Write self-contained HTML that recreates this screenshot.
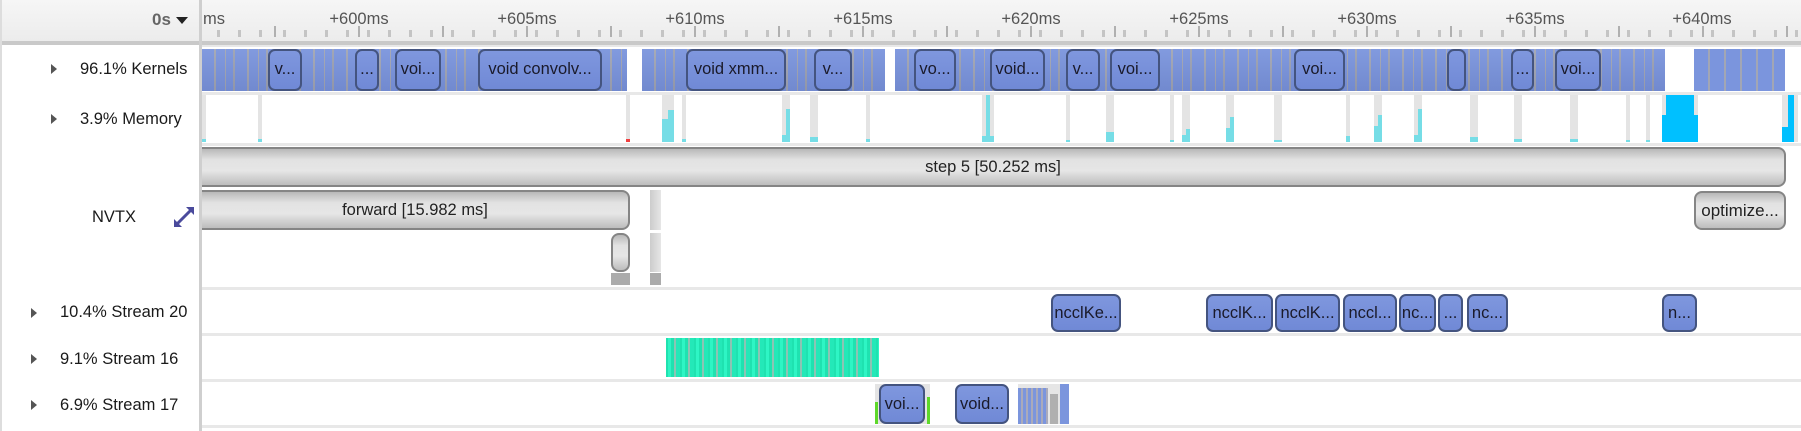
<!DOCTYPE html>
<html><head><meta charset="utf-8"><style>
*{margin:0;padding:0;box-sizing:border-box}
body{width:1801px;height:431px;background:#fff;position:relative;overflow:hidden;font-family:"Liberation Sans",sans-serif;color:#1a1a1a}
.a{position:absolute}
.lbl{position:absolute;font-size:16.5px;white-space:nowrap;line-height:20px}
.tri{position:absolute;width:0;height:0;border-top:5px solid transparent;border-bottom:5px solid transparent;border-left:6px solid #555}
.sep{position:absolute;left:202px;right:0;height:3px;background:#e8e8e8}
.kb{position:absolute;top:49px;height:42px;background:linear-gradient(rgba(255,255,255,.05),rgba(0,0,40,.08)),repeating-linear-gradient(90deg,#7b95dd 0 12px,#a2a6b4 12px 14px,#7b95dd 14px 23px,#a2a6b4 23px 24px,#7b95dd 24px 31px,#9da2b2 31px 33px)}
.box{position:absolute;border:2px solid #44547f;border-radius:7px;background:linear-gradient(#7f97de,#7089d6);font-size:16.5px;line-height:36px;text-align:center;color:#1a1a2a;overflow:hidden;white-space:nowrap}
.mg{position:absolute;top:95px;height:47px;background:#e4e4e4}
.mc{position:absolute;bottom:0;left:0;right:0;background:#76dde6}
.nv{position:absolute;border:2px solid #858585;border-radius:8px;background:linear-gradient(#b8b8b8,#e2e2e2 30%,#e6e6e6 60%,#bdbdbd);font-size:16.5px;text-align:center;color:#222;white-space:nowrap}
.tk{position:absolute;top:10px;font-size:16.5px;color:#555;transform:translateX(-50%)}
</style></head><body>
<div class="a" style="left:0;top:0;width:1801px;height:41px;background:linear-gradient(#f6f6f6,#ececec)"></div>
<div class="a" style="left:0;top:41px;width:1801px;height:4px;background:#c9c9c9"></div>
<div class="a" style="left:202px;top:30px;width:1599px;height:7px;background:repeating-linear-gradient(90deg,transparent 0 9px,#c4c4c4 9px 12px,transparent 12px 21px);background-position:72px 0"></div>
<div class="a" style="left:202px;top:26px;width:1599px;height:11px;background:repeating-linear-gradient(90deg,transparent 0 82px,#b0b0b0 82px 85px,transparent 85px 84px);background-size:84px 11px;background-position:74px 0"></div>
<div class="lbl" style="left:152px;top:10px;font-weight:bold;color:#666;font-size:17px">0s</div>
<div class="a" style="left:176px;top:17px;width:0;height:0;border-left:6px solid transparent;border-right:6px solid transparent;border-top:7px solid #222"></div>
<div class="tk" style="left:214px">ms</div>
<div class="tk" style="left:359px">+600ms</div>
<div class="tk" style="left:527px">+605ms</div>
<div class="tk" style="left:695px">+610ms</div>
<div class="tk" style="left:863px">+615ms</div>
<div class="tk" style="left:1031px">+620ms</div>
<div class="tk" style="left:1199px">+625ms</div>
<div class="tk" style="left:1367px">+630ms</div>
<div class="tk" style="left:1535px">+635ms</div>
<div class="tk" style="left:1702px">+640ms</div>
<div class="a" style="left:0;top:0;width:2px;height:431px;background:#ddd"></div>
<div class="a" style="left:199px;top:0;width:3px;height:431px;background:#cfcfcf"></div>
<div class="tri" style="left:51px;top:64px"></div><div class="lbl" style="left:80px;top:59px">96.1% Kernels</div>
<div class="tri" style="left:51px;top:114px"></div><div class="lbl" style="left:80px;top:109px">3.9% Memory</div>
<div class="lbl" style="left:92px;top:207px">NVTX</div>
<svg class="a" style="left:172px;top:205px" width="24" height="24" viewBox="0 0 24 24"><path d="M4 20L20 4" stroke="#4a4a9c" stroke-width="3"/><path d="M2 22L2 14L10 22Z M22 2L22 10L14 2Z" fill="#4a4a9c"/></svg>
<div class="tri" style="left:31px;top:308px"></div><div class="lbl" style="left:60px;top:302px">10.4% Stream 20</div>
<div class="tri" style="left:31px;top:354px"></div><div class="lbl" style="left:60px;top:349px">9.1% Stream 16</div>
<div class="tri" style="left:31px;top:400px"></div><div class="lbl" style="left:60px;top:395px">6.9% Stream 17</div>
<div class="sep" style="top:45px;height:2px"></div>
<div class="sep" style="top:92px"></div>
<div class="sep" style="top:143px"></div>
<div class="sep" style="top:287px"></div>
<div class="sep" style="top:333px"></div>
<div class="sep" style="top:379px"></div>
<div class="sep" style="top:425px"></div>
<div class="kb" style="left:202px;width:425px"></div>
<div class="kb" style="left:642px;width:243px"></div>
<div class="kb" style="left:895px;width:770px"></div>
<div class="kb" style="left:1694px;width:91px;background:repeating-linear-gradient(90deg,#7b95dd 0 14px,#a2a6b4 14px 16px)"></div>
<div class="box" style="top:49px;height:42px;left:268px;width:34px">v...</div>
<div class="box" style="top:49px;height:42px;left:355px;width:24px">...</div>
<div class="box" style="top:49px;height:42px;left:395px;width:46px">voi...</div>
<div class="box" style="top:49px;height:42px;left:478px;width:124px">void convolv...</div>
<div class="box" style="top:49px;height:42px;left:686px;width:100px">void xmm...</div>
<div class="box" style="top:49px;height:42px;left:814px;width:38px">v...</div>
<div class="box" style="top:49px;height:42px;left:914px;width:42px">vo...</div>
<div class="box" style="top:49px;height:42px;left:990px;width:55px">void...</div>
<div class="box" style="top:49px;height:42px;left:1066px;width:34px">v...</div>
<div class="box" style="top:49px;height:42px;left:1110px;width:50px">voi...</div>
<div class="box" style="top:49px;height:42px;left:1294px;width:51px">voi...</div>
<div class="box" style="top:49px;height:42px;left:1447px;width:19px"></div>
<div class="box" style="top:49px;height:42px;left:1511px;width:23px">...</div>
<div class="box" style="top:49px;height:42px;left:1555px;width:46px">voi...</div>
<div class="mg" style="left:202px;width:4px"><div class="mc" style="height:3px"></div></div>
<div class="mg" style="left:258px;width:4px"><div class="mc" style="height:3px"></div></div>
<div class="mg" style="left:626px;width:4px"><div class="mc" style="height:3px;background:#f04040"></div></div>
<div class="mg" style="left:662px;width:12px"><div class="mc" style="height:32px;left:6px"></div><div class="mc" style="height:23px;right:6px"></div></div>
<div class="mg" style="left:682px;width:4px"><div class="mc" style="height:3px"></div></div>
<div class="mg" style="left:782px;width:8px"><div class="mc" style="height:33px;left:4px"></div><div class="mc" style="height:7px"></div></div>
<div class="mg" style="left:810px;width:8px"><div class="mc" style="height:5px"></div></div>
<div class="mg" style="left:866px;width:4px"><div class="mc" style="height:3px"></div></div>
<div class="mg" style="left:982px;width:12px"><div class="mc" style="height:47px;left:4px;right:4px"></div><div class="mc" style="height:6px"></div></div>
<div class="mg" style="left:1066px;width:4px"><div class="mc" style="height:2px"></div></div>
<div class="mg" style="left:1106px;width:8px"><div class="mc" style="height:10px"></div></div>
<div class="mg" style="left:1170px;width:4px"><div class="mc" style="height:2px"></div></div>
<div class="mg" style="left:1182px;width:8px"><div class="mc" style="height:13px;left:4px"></div><div class="mc" style="height:7px"></div></div>
<div class="mg" style="left:1226px;width:8px"><div class="mc" style="height:25px;left:4px"></div><div class="mc" style="height:14px"></div></div>
<div class="mg" style="left:1274px;width:8px"><div class="mc" style="height:2px"></div></div>
<div class="mg" style="left:1346px;width:4px"><div class="mc" style="height:6px"></div></div>
<div class="mg" style="left:1374px;width:8px"><div class="mc" style="height:27px;left:4px"></div><div class="mc" style="height:16px"></div></div>
<div class="mg" style="left:1414px;width:8px"><div class="mc" style="height:33px;left:4px"></div><div class="mc" style="height:7px"></div></div>
<div class="mg" style="left:1470px;width:8px"><div class="mc" style="height:5px"></div></div>
<div class="mg" style="left:1514px;width:8px"><div class="mc" style="height:3px"></div></div>
<div class="mg" style="left:1570px;width:8px"><div class="mc" style="height:3px"></div></div>
<div class="mg" style="left:1626px;width:4px"><div class="mc" style="height:2px"></div></div>
<div class="mg" style="left:1646px;width:4px"><div class="mc" style="height:2px"></div></div>
<div class="mg" style="left:1662px;width:36px"><div class="mc" style="height:47px;background:#00c0ff;left:4px;right:4px"></div><div class="mc" style="height:27px;background:#00c0ff"></div></div>
<div class="mg" style="left:1782px;width:16px"><div class="mc" style="height:47px;background:#00c0ff;left:6px;right:4px"></div><div class="mc" style="height:15px;background:#00c0ff;right:4px"></div></div>
<div class="nv" style="left:202px;top:147px;width:1584px;height:40px;line-height:36px;border-left:none;border-top-left-radius:0;border-bottom-left-radius:0">step 5 [50.252 ms]</div>
<div class="nv" style="left:202px;top:190px;width:428px;height:40px;line-height:36px;border-left:none;border-top-left-radius:0;border-bottom-left-radius:0">forward [15.982 ms]</div>
<div class="a" style="left:650px;top:190px;width:11px;height:40px;background:linear-gradient(90deg,#ccc,#e6e6e6)"></div>
<div class="a" style="left:650px;top:233px;width:11px;height:39px;background:linear-gradient(90deg,#ccc,#e6e6e6)"></div>
<div class="nv" style="left:611px;top:233px;width:19px;height:39px"></div>
<div class="a" style="left:611px;top:273px;width:19px;height:12px;background:#ababab"></div>
<div class="a" style="left:650px;top:273px;width:11px;height:12px;background:#ababab"></div>
<div class="nv" style="left:1694px;top:191px;width:92px;height:39px;line-height:35px;font-size:17px">optimize...</div>
<div class="box" style="top:294px;height:38px;left:1051px;width:70px;line-height:34px">ncclKe...</div>
<div class="box" style="top:294px;height:38px;left:1206px;width:67px;line-height:34px">ncclK...</div>
<div class="box" style="top:294px;height:38px;left:1275px;width:65px;line-height:34px">ncclK...</div>
<div class="box" style="top:294px;height:38px;left:1343px;width:54px;line-height:34px">nccl...</div>
<div class="box" style="top:294px;height:38px;left:1399px;width:37px;line-height:34px">nc...</div>
<div class="box" style="top:294px;height:38px;left:1438px;width:25px;line-height:34px">...</div>
<div class="box" style="top:294px;height:38px;left:1467px;width:41px;line-height:34px">nc...</div>
<div class="box" style="top:294px;height:38px;left:1662px;width:35px;line-height:34px">n...</div>
<div class="a" style="left:666px;top:338px;width:213px;height:39px;background:repeating-linear-gradient(90deg,#1fe2b0 0 2px,#2ef5c4 2px 5px,#1fe2b0 5px 8px,#8cc4b4 8px 10px,#24e8b8 10px 14px)"></div>
<div class="a" style="left:875px;top:384px;width:55px;height:40px;background:#e4e4e4"></div>
<div class="a" style="left:875px;top:402px;width:3px;height:22px;background:#5ed82a"></div>
<div class="a" style="left:927px;top:397px;width:3px;height:27px;background:#5ed82a"></div>
<div class="box" style="top:384px;height:40px;left:879px;width:46px;line-height:36px">voi...</div>
<div class="box" style="top:384px;height:40px;left:955px;width:54px;line-height:36px">void...</div>
<div class="a" style="left:1018px;top:384px;width:51px;height:40px;background:#e6e6e6"></div>
<div class="a" style="left:1018px;top:388px;width:30px;height:36px;background:repeating-linear-gradient(90deg,#7b95dd 0 3px,#aab 3px 5px)"></div>
<div class="a" style="left:1050px;top:394px;width:8px;height:30px;background:#b0b0b0"></div>
<div class="a" style="left:1060px;top:384px;width:9px;height:40px;background:#7b95dd"></div>
</body></html>
